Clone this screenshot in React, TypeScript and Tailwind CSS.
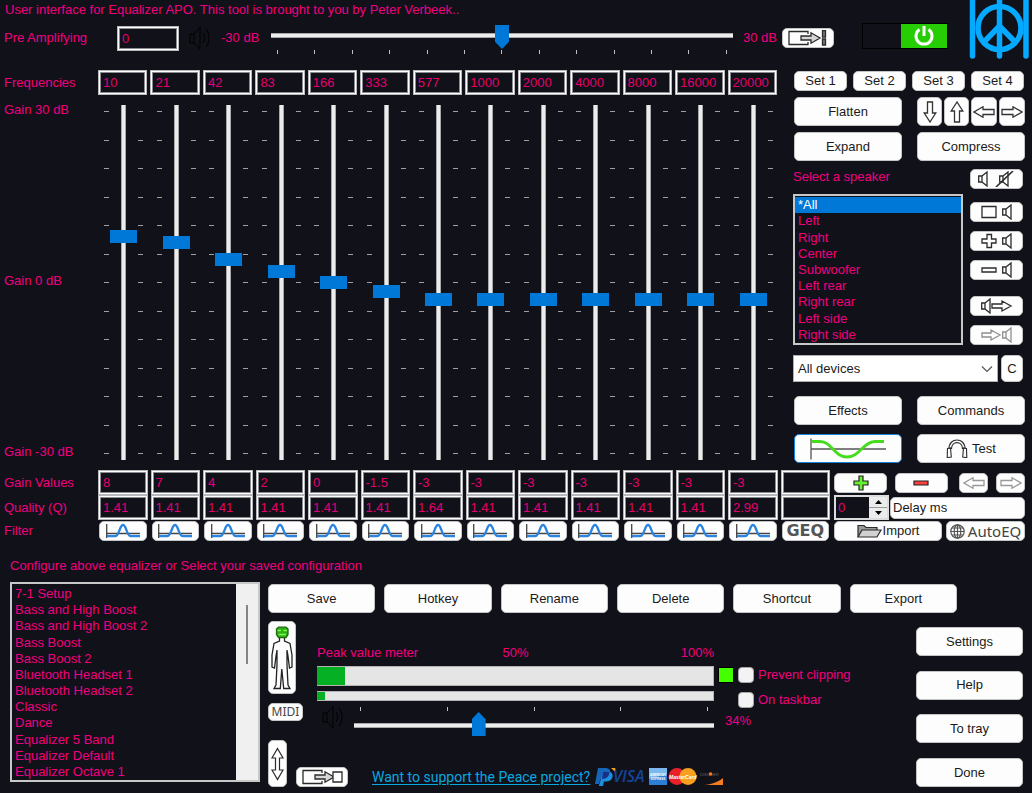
import { useState } from "react";
import type { ReactNode } from "react";
import clsx from "clsx";

const FREQUENCIES = ["10", "21", "42", "83", "166", "333", "577", "1000", "2000", "4000", "8000", "16000", "20000"];
const GAINS = ["8", "7", "4", "2", "0", "-1.5", "-3", "-3", "-3", "-3", "-3", "-3", "-3", ""];
const QUALITIES = ["1.41", "1.41", "1.41", "1.41", "1.41", "1.41", "1.64", "1.41", "1.41", "1.41", "1.41", "1.41", "2.99", ""];
const SPEAKERS = ["*All", "Left", "Right", "Center", "Subwoofer", "Left rear", "Right rear", "Left side", "Right side"];
const PRESETS = [
  "7-1 Setup",
  "Bass and High Boost",
  "Bass and High Boost 2",
  "Bass Boost",
  "Bass Boost 2",
  "Bluetooth Headset 1",
  "Bluetooth Headset 2",
  "Classic",
  "Dance",
  "Equalizer 5 Band",
  "Equalizer Default",
  "Equalizer Octave 1",
];

const fieldStyle =
  "h-[25px] w-full min-w-0 border border-[#b8b8bc] bg-transparent pl-[4px] text-[#e4006f] shadow-[inset_0_0_0_1px_#ffffff,inset_0_0_0_2px_#8c8c90] outline-none";

function Button({ className, label, children }: { className?: string; label?: string; children: ReactNode }) {
  return (
    <button
      type="button"
      aria-label={label}
      className={clsx(
        "flex shrink-0 items-center justify-center rounded-[5px] border border-[#c4c4c4] bg-[#fdfdfd] text-[#1a1a1a]",
        className,
      )}
    >
      {children}
    </button>
  );
}

function Field({ value, label, onChange }: { value: string; label: string; onChange?: (v: string) => void }) {
  const [own, setOwn] = useState(value);
  return (
    <input
      type="text"
      aria-label={label}
      value={onChange ? value : own}
      onChange={(e) => (onChange ? onChange(e.target.value) : setOwn(e.target.value))}
      className={fieldStyle}
    />
  );
}

/* ---------- icons ---------- */

function SoundIcon() {
  return (
    <svg width="22" height="24" viewBox="0 0 22 24" fill="none" stroke="#000" strokeWidth="1" className="shrink-0">
      <path d="M1 8h4v9H1zM5 8l6-7v22l-6-6" />
      <path d="M14 7c2 3 2 7 0 10M17 3c4 5 4 13 0 18" />
    </svg>
  );
}

function ArrowIcon({ dir, color = "#333" }: { dir: "left" | "right" | "up" | "down"; color?: string }) {
  if (dir === "left" || dir === "right") {
    return (
      <svg width="22" height="12" viewBox="0 0 22 12" fill="#fff" stroke={color} strokeWidth="1.3">
        <path d="M1 3.500h11V.8L21 6l-9 5.200V8.500H1z" transform={dir === "left" ? "rotate(180 11 6)" : undefined} />
      </svg>
    );
  }
  return (
    <svg width="14" height="22" viewBox="0 0 14 22" fill="#fff" stroke={color} strokeWidth="1.3">
      <path d="M4.500 1v11H1.200L7 21l5.800-9H9.500V1z" transform={dir === "up" ? "rotate(180 7 11)" : undefined} />
    </svg>
  );
}

function TransferIcon({ target }: { target: "bar" | "box" }) {
  return (
    <svg width="42" height="16" viewBox="0 0 42 16" fill="none" stroke="#2b2b2b" strokeWidth="1.3">
      <path d="M21 4V1.500H2v13h19V12" />
      <path d="M14 6h10V2.800L33 8l-9 5.200V10H14z" fill="#d6d6d6" />
      {target === "bar" ? (
        <path d="M35.500.7h3v6.500h-3zM35.500 9h3v6h-3z" fill="#777" />
      ) : (
        <path d="M32 3h9v10h-9z" fill="#fff" />
      )}
    </svg>
  );
}

function PeaceLogo() {
  return (
    <svg width="60" height="59" viewBox="0 0 60 59" fill="none" stroke="#05a9ff" strokeWidth="5.500" strokeLinecap="round" className="shrink-0">
      <path d="M3.500 0v56M57 0v56M30.500 0v56" />
      <circle cx="30.500" cy="28" r="21.500" />
      <path d="M30.500 26L15 42M30.500 26L46 42" strokeLinecap="butt" />
    </svg>
  );
}

type SpeakerGlyph = "mute" | "box" | "plus" | "minus" | "out" | "in";

function SpeakerShape({ x }: { x: number }) {
  return (
    <g transform={`translate(${x} 0)`}>
      <path d="M.7 5h3.300v6H.7zM4 5l5-4v14l-5-4" />
    </g>
  );
}

function SpeakerIcon({ kind }: { kind: SpeakerGlyph }) {
  return (
    <svg width="42" height="16" viewBox="0 0 42 16" fill="none" stroke={kind === "in" ? "#8f8f8f" : "#2b2b2b"} strokeWidth="1.300">
      {kind === "mute" && (
        <>
          <SpeakerShape x={2} />
          <SpeakerShape x={23} />
          <path d="M20 16L37 0" strokeWidth="1.600" />
        </>
      )}
      {kind === "box" && (
        <>
          <path d="M6 2.500h14v11H6z" />
          <SpeakerShape x={26} />
        </>
      )}
      {kind === "plus" && (
        <>
          <path d="M11 1.500h4.500V6H20v4h-4.500v4.500H11V10H6V6h5z" />
          <SpeakerShape x={26} />
        </>
      )}
      {kind === "minus" && (
        <>
          <path d="M6 6h14v4H6z" />
          <SpeakerShape x={26} />
        </>
      )}
      {kind === "out" && (
        <>
          <SpeakerShape x={5} />
          <path d="M16 6h10V3l9 5-9 5v-3H16z" />
        </>
      )}
      {kind === "in" && (
        <>
          <path d="M6 6h9V3l9 5-9 5v-3H6z" />
          <SpeakerShape x={26} />
        </>
      )}
    </svg>
  );
}

function FilterIcon() {
  return (
    <svg width="34" height="16" viewBox="0 0 34 16" fill="none">
      <path d="M.7 1v14M0 10.500h34" stroke="#444" strokeWidth="1.300" />
      <path d="M1 13.200h8c4.500 0 4.500-11.200 8-11.200s3.500 11.200 8 11.200h9" stroke="#2b84e0" strokeWidth="2.300" />
    </svg>
  );
}

function GraphIcon() {
  return (
    <svg width="76" height="22" viewBox="0 0 76 22" fill="none">
      <path d="M1 .5v21M1 11h75" stroke="#555" strokeWidth="1.300" />
      <path d="M2 3.500h8c12 0 14 15.500 27 15.500S53 3.500 65 3.500h9" stroke="#46dc1e" strokeWidth="2.800" />
    </svg>
  );
}

function HeadphoneIcon() {
  return (
    <svg width="22" height="20" viewBox="0 0 22 20" fill="none" stroke="#2b2b2b" strokeWidth="1.100">
      <path d="M3 10C2.500-2 19.500-2 19 10M5.500 10c0-8.500 11-8.500 11 0" />
      <path d="M1.500 9.500l3-.5.800 9-3 .5H1.200zM20.500 9.500l-3-.5-.8 9 3 .5h1.100z" />
    </svg>
  );
}

function FolderIcon() {
  return (
    <svg width="25" height="14" viewBox="0 0 25 14" stroke="#2b2b2b" strokeWidth="1.200">
      <path d="M1 13V1.500h6l2 2h11V6" fill="#999" />
      <path d="M1 13L5 6h19l-4 7z" fill="#d2d2d2" />
    </svg>
  );
}

function GlobeIcon() {
  return (
    <svg width="15" height="15" viewBox="0 0 15 15" fill="none" stroke="#555" strokeWidth="1.200">
      <circle cx="7.500" cy="7.500" r="6.700" />
      <ellipse cx="7.500" cy="7.500" rx="3.300" ry="6.700" />
      <path d="M7.500.8v13.400M.8 7.500h13.400M1.800 4h11.400M1.800 11h11.400" />
    </svg>
  );
}

function PersonIcon() {
  return (
    <svg width="22" height="64" viewBox="0 0 22 64" fill="none" stroke="#222" strokeWidth="1.300">
      <path d="M8.500 12v3L3 17.500 1 29v12l2.500 1L5 30l1-6v15l-1 20-2 3.500h6.300L10.800 43l1.900 19.500h6.300L17 59l-1-20V24l1 6 1.500 12 2.500-1V29l-2-11.500-5.500-2.500v-3" />
      <path d="M5.500 3l2-1.800h7.500L17 3v5.500l-2 3.200H7.500l-2-3.200z" fill="#2fae16" stroke="#1d6b0d" />
      <path d="M6.500 4.500H10M12.500 4.500H16M7.500 8.500H15" stroke="#7dff50" />
    </svg>
  );
}

function UpDownIcon() {
  return (
    <svg width="13" height="34" viewBox="0 0 13 34" fill="#fff" stroke="#2b2b2b" strokeWidth="1.200">
      <path d="M6.500 1.500L12 11H8.500v12H12l-5.500 9.500L1 23h3.500V11H1z" />
    </svg>
  );
}

function PaymentIcons() {
  return (
    <svg width="130" height="20" viewBox="0 0 130 20" role="img" aria-label="Payment options">
      <path d="M3 1h7c4 0 6 2 5 6-1 3.500-4 5-7.500 5H5.500L4 17H0z" fill="#1565b8" />
      <path d="M8 5h5.500c3.500 0 4.500 2 4 5-1 3.500-3.500 4.500-7 4.500H9L8 19H3.800z" fill="#1a8fe0" />
      <path d="M8 5h5l1.500.3C14 10 11 12 7 12z" fill="#1b2f86" />
      <path d="M16 1h4l1.500 5z" fill="#f3a712" />
      <text x="18" y="15" fontFamily="Open Sans, sans-serif" fontSize="16" fontStyle="italic" fontWeight="600" fill="#12459a">VISA</text>
      <path d="M54 1h18v17H54z" fill="#2d7fd6" />
      <path d="M54 1h18v6l-18 5z" fill="#7ab8ee" />
      <text x="55" y="9" fontFamily="Liberation Sans, sans-serif" fontSize="3" fontWeight="700" fill="#fff">AMERICAN</text>
      <text x="56" y="13" fontFamily="Liberation Sans, sans-serif" fontSize="3" fontWeight="700" fill="#fff">EXPRESS</text>
      <circle cx="82" cy="9.500" r="8.500" fill="#e8202a" />
      <circle cx="93" cy="9.500" r="8.500" fill="#f79f1f" />
      <text x="74" y="12" fontFamily="Liberation Sans, sans-serif" fontSize="5" fontStyle="italic" fontWeight="700" fill="#fff">MasterCard</text>
      <text x="105" y="9" fontFamily="Liberation Sans, sans-serif" fontSize="4" fill="#666">DISC VER</text>
      <circle cx="115.500" cy="7" r="1.800" fill="#f47b20" />
      <path d="M128 11v7h-19c8-.5 14-3 19-7z" fill="#f47b20" />
    </svg>
  );
}

/* ---------- equalizer bands ---------- */

function BandTicks() {
  return (
    <div className="flex flex-col justify-between py-[6px]">
      {Array.from({ length: 13 }, (_, i) => (
        <span key={i} className="h-px w-[5px] bg-[#a0a0a0]" />
      ))}
    </div>
  );
}

function Band({ value, label, onChange }: { value: number; label: string; onChange: (v: string) => void }) {
  return (
    <div className="flex h-[355px] justify-center pl-[2px]">
      <BandTicks />
      <div className="mx-px flex">
        <input
          type="range"
          min={-30}
          max={30}
          step={0.5}
          value={value}
          aria-label={label}
          onChange={(e) => onChange(e.target.value)}
          className="m-0 h-full w-[27px] appearance-none bg-transparent bg-[linear-gradient(90deg,#a8a8a8_1px,#ececec_1px,#ececec_4px,#a8a8a8_4px)] bg-[length:5px_100%] bg-center bg-no-repeat [direction:rtl] [writing-mode:vertical-lr] [&::-webkit-slider-thumb]:h-[13px] [&::-webkit-slider-thumb]:w-[27px] [&::-webkit-slider-thumb]:appearance-none [&::-webkit-slider-thumb]:bg-[#0078d7]"
        />
      </div>
      <BandTicks />
    </div>
  );
}

const horizontalSlider =
  "m-0 block w-full appearance-none bg-transparent bg-[linear-gradient(#a8a8a8_1px,#ececec_1px,#ececec_4px,#a8a8a8_4px)] bg-[length:100%_5px] bg-no-repeat [&::-webkit-slider-thumb]:h-[24px] [&::-webkit-slider-thumb]:w-[14px] [&::-webkit-slider-thumb]:appearance-none [&::-webkit-slider-thumb]:bg-[#0078d7]";

function SliderTicks({ count }: { count: number }) {
  return (
    <div className="flex justify-between px-[6px]">
      {Array.from({ length: count }, (_, i) => (
        <span key={i} className="h-[4px] w-px bg-[#c0c0c0]" />
      ))}
    </div>
  );
}

function ListBox({ items, initial, label }: { items: string[]; initial: number; label: string }) {
  const [selected, setSelected] = useState(initial);
  return (
    <ul role="listbox" aria-label={label} className="flex h-full min-w-0 flex-1 flex-col">
      {items.map((item, i) => (
        <li
          key={item}
          role="option"
          aria-selected={i === selected}
          onClick={() => setSelected(i)}
          className={clsx("flex flex-1 items-center pl-[3px] leading-4", i === selected && "bg-[#0078d7] text-white")}
        >
          {item}
        </li>
      ))}
    </ul>
  );
}

function Header() {
  const [preamp, setPreamp] = useState("0");
  const [on, setOn] = useState(true);
  return (
    <header className="flex items-start pr-[3px]">
      <div className="min-w-0 flex-1">
        <p className="pl-[5px] leading-5">User interface for Equalizer APO. This tool is brought to you by Peter Verbeek..</p>
        <div className="mt-[3px] flex h-[30px] items-center">
          <label htmlFor="preamp" className="w-[117px] shrink-0 pl-[4px]">Pre Amplifying</label>
          <input id="preamp" type="text" value={preamp} onChange={(e) => setPreamp(e.target.value)} className={clsx(fieldStyle, "max-w-[62px]")} />
          <div className="mx-[10px] flex">
            <SoundIcon />
          </div>
          <span className="w-[40px] shrink-0 whitespace-nowrap">-30 dB</span>
          <div className="mx-[10px] min-w-0 flex-1 pt-[3px]">
            <input
              type="range"
              min={-30}
              max={30}
              value={Number(preamp) || 0}
              aria-label="Pre amplifying gain"
              onChange={(e) => setPreamp(e.target.value)}
              className={clsx(horizontalSlider, "h-[24px] bg-[position:0_8px] [&::-webkit-slider-thumb]:[clip-path:polygon(0_0,100%_0,100%_70%,50%_100%,0_70%)]")}
            />
            <div className="pt-[1px]">
              <SliderTicks count={13} />
            </div>
          </div>
          <span className="w-[39px] shrink-0 whitespace-nowrap">30 dB</span>
          <Button className="h-[20px] w-[52px]" label="Send pre amplifying">
            <TransferIcon target="bar" />
          </Button>
        </div>
      </div>
      <button
        type="button"
        role="switch"
        aria-checked={on}
        aria-label="Equalizer power"
        onClick={() => setOn(!on)}
        className="mr-[21px] ml-[28px] mt-[23px] flex h-[26px] w-[86px] justify-end border border-black"
      >
        <span className="flex h-full w-[46px] items-center justify-center bg-[#26cc04]">
          <svg width="22" height="22" viewBox="0 0 22 22" fill="none" stroke="#fff" strokeWidth="3">
            <path d="M6.500 4.500a8 8 0 1 0 9 0M11 1v10" />
          </svg>
        </span>
      </button>
      <PeaceLogo />
    </header>
  );
}

function SpeakerPanel() {
  const sideButtons: { kind: SpeakerGlyph; space: string }[] = [
    { kind: "mute", space: "" },
    { kind: "box", space: "mt-[13px]" },
    { kind: "plus", space: "mt-[9px]" },
    { kind: "minus", space: "mt-[9px]" },
    { kind: "out", space: "mt-[16px]" },
    { kind: "in", space: "mt-[9px]" },
  ];
  return (
    <section className="flex w-[232px] shrink-0 flex-col pl-px">
      <div className="mt-px flex gap-[6px]">
        {["Set 1", "Set 2", "Set 3", "Set 4"].map((s) => (
          <Button key={s} className="h-[20px] w-[53px]">{s}</Button>
        ))}
      </div>
      <div className="mt-[6px] flex justify-between">
        <Button className="h-[29px] w-[108px]">Flatten</Button>
        <div className="flex gap-[2px]">
          <Button className="h-[29px] w-[25px]" label="Lower all"><ArrowIcon dir="down" /></Button>
          <Button className="h-[29px] w-[25px]" label="Raise all"><ArrowIcon dir="up" /></Button>
          <Button className="h-[29px] w-[26px]" label="Shift left"><ArrowIcon dir="left" /></Button>
          <Button className="h-[29px] w-[26px]" label="Shift right"><ArrowIcon dir="right" /></Button>
        </div>
      </div>
      <div className="mt-[6px] flex justify-between">
        <Button className="h-[29px] w-[108px]">Expand</Button>
        <Button className="h-[29px] w-[108px]">Compress</Button>
      </div>
      <div className="mt-[8px] flex justify-between pr-[2px]">
        <div className="-ml-px w-[170px]">
          <p className="leading-4">Select a speaker</p>
          <div className="mt-[9px] flex h-[151px] border-2 border-[#c8c8c8] pt-px">
            <ListBox items={SPEAKERS} initial={0} label="Select a speaker" />
          </div>
        </div>
        <div className="flex w-[53px] flex-col">
          {sideButtons.map(({ kind, space }) => (
            <Button key={kind} className={clsx("h-[20px] w-[53px]", space)} label={`Speaker ${kind}`}>
              <SpeakerIcon kind={kind} />
            </Button>
          ))}
        </div>
      </div>
      <div className="-ml-px mt-[10px] flex gap-[3px] pr-[2px]">
        <div className="relative min-w-0 flex-1">
          <select aria-label="Device" className="h-[27px] w-full appearance-none border border-[#b0b0b0] bg-white pl-[4px] text-[#1a1a1a]">
            <option>All devices</option>
          </select>
          <svg width="12" height="8" viewBox="0 0 12 8" fill="none" stroke="#555" strokeWidth="1.200" className="pointer-events-none absolute top-[10px] right-[5px]">
            <path d="M1 1.500l5 5 5-5" />
          </svg>
        </div>
        <Button className="h-[27px] w-[22px]">C</Button>
      </div>
      <div className="mt-[14px] flex justify-between">
        <Button className="h-[29px] w-[108px]">Effects</Button>
        <Button className="h-[29px] w-[108px]">Commands</Button>
      </div>
      <div className="mt-[9px] flex justify-between">
        <Button className="h-[29px] w-[108px] border-[#1583dc]!" label="Graph"><GraphIcon /></Button>
        <Button className="h-[29px] w-[108px] gap-[4px]"><HeadphoneIcon />Test</Button>
      </div>
    </section>
  );
}

function ValueRow({ label, children, side }: { label: string; children: ReactNode; side: ReactNode }) {
  return (
    <div className="flex items-center">
      <span className="w-[98px] shrink-0 pl-[4px]">{label}</span>
      <div className="grid min-w-0 flex-1 grid-cols-14 gap-[3px]">{children}</div>
      <div className="ml-[4px] flex w-[191px] shrink-0 items-center justify-between">{side}</div>
    </div>
  );
}

function DelaySpinner() {
  const [delay, setDelay] = useState(0);
  return (
    <div className="flex h-[25px] w-[55px] border-2 border-[#dcdcdc]">
      <input
        type="text"
        aria-label="Delay"
        value={delay}
        onChange={(e) => setDelay(Number(e.target.value) || 0)}
        className="w-0 flex-1 bg-transparent pl-[2px] text-[#e4006f] outline-none"
      />
      <div className="flex w-[18px] flex-col bg-[#ececec]">
        <button type="button" aria-label="Increase delay" onClick={() => setDelay(delay + 1)} className="flex flex-1 items-center justify-center border-b border-[#9a9a9a]">
          <svg width="7" height="4" viewBox="0 0 7 4"><path d="M0 4l3.500-4L7 4z" /></svg>
        </button>
        <button type="button" aria-label="Decrease delay" onClick={() => setDelay(delay - 1)} className="flex flex-1 items-center justify-center">
          <svg width="7" height="4" viewBox="0 0 7 4"><path d="M0 0l3.500 4L7 0z" /></svg>
        </button>
      </div>
    </div>
  );
}

function Check({ id, label }: { id: string; label: string }) {
  return (
    <>
      <input id={id} type="checkbox" className="size-[16px] shrink-0 appearance-none rounded-[4px] border border-[#a8a8a8] bg-[#f3f3f3] checked:bg-[#0078d7]" />
      <label htmlFor={id} className="ml-[4px] whitespace-nowrap leading-4">{label}</label>
    </>
  );
}

function PeakMeter() {
  const [volume, setVolume] = useState(34);
  return (
    <>
      <div className="ml-[14px] min-w-0 flex-1 pt-[24px]">
        <div className="grid grid-cols-3 leading-4">
          <span>Peak value meter</span>
          <span className="text-center">50%</span>
          <span className="text-right">100%</span>
        </div>
        <div className="mt-[5px] h-[20px] border-y border-r border-[#b4b4b4] bg-[#e5e5e5]">
          <div className="h-full w-[7%] bg-[#06b025]" />
        </div>
        <div className="mt-[5px] h-[10px] border-y border-r border-[#b4b4b4] bg-[#e5e5e5]">
          <div className="h-full w-[2%] bg-[#06b025]" />
        </div>
        <div className="mt-[4px] flex pl-[5px]">
          <SoundIcon />
          <div className="ml-[10px] min-w-0 flex-1 pt-[2px]">
            <SliderTicks count={5} />
            <input
              type="range"
              min={0}
              max={100}
              value={volume}
              aria-label="Volume"
              onChange={(e) => setVolume(Number(e.target.value))}
              className={clsx(horizontalSlider, "mt-px h-[24px] bg-[position:0_11px] [&::-webkit-slider-thumb]:[clip-path:polygon(50%_0,100%_30%,100%_100%,0_100%,0_30%)]")}
            />
          </div>
        </div>
      </div>
      <div className="ml-[4px] w-[198px] shrink-0 pt-[46px]">
        <div className="flex items-center">
          <span className="mr-[4px] size-[16px] border border-black bg-[#44ff00]" />
          <Check id="clipping" label="Prevent clipping" />
        </div>
        <div className="mt-[9px] flex items-center pl-[20px]">
          <Check id="taskbar" label="On taskbar" />
        </div>
        <p className="mt-[5px] pl-[7px] leading-4">{volume}%</p>
      </div>
    </>
  );
}

function Configurations() {
  return (
    <section className="mt-[17px] px-[10px] pr-[9px]">
      <h2 className="leading-4">Configure above equalizer or Select your saved configuration</h2>
      <div className="mt-[8px] flex">
        <div className="flex h-[200px] w-[250px] shrink-0 border-2 border-[#c8c8c8]">
          <div className="flex min-w-0 flex-1 pt-[2px]">
            <ListBox items={PRESETS} initial={-1} label="Saved configurations" />
          </div>
          <div className="flex w-[22px] justify-center bg-[#f0f0f0] pt-[21px]">
            <span className="h-[59px] w-[2px] bg-[#858585]" />
          </div>
        </div>
        <div className="ml-[8px] min-w-0 flex-1 pt-[2px]">
          <div className="mr-[66px] grid grid-cols-6 gap-[9px]">
            {["Save", "Hotkey", "Rename", "Delete", "Shortcut", "Export"].map((b) => (
              <Button key={b} className="h-[29px]">{b}</Button>
            ))}
          </div>
          <div className="mt-[8px] flex">
            <div className="min-w-0 flex-1">
              <div className="flex h-[119px]">
                <div className="w-[35px] shrink-0">
                  <Button className="h-[73px] w-[28px]" label="Person"><PersonIcon /></Button>
                  <Button className="mt-[9px] h-[18px] w-[35px] font-['Noto_Sans',sans-serif] text-[12px] text-[#444]!">MIDI</Button>
                </div>
                <PeakMeter />
              </div>
              <div className="flex items-end">
                <Button className="h-[47px] w-[19px]" label="Resize"><UpDownIcon /></Button>
                <Button className="ml-[9px] h-[20px] w-[52px]" label="Send configuration"><TransferIcon target="box" /></Button>
                <a href="#support" className="ml-[24px] font-[Roboto,sans-serif] text-[14px] leading-5 whitespace-nowrap text-[#08a8e0] underline underline-offset-2">
                  Want to support the Peace project?
                </a>
                <div className="ml-[5px] shrink-0"><PaymentIcons /></div>
              </div>
            </div>
            <div className="flex w-[107px] shrink-0 flex-col justify-between pt-[6px]">
              {["Settings", "Help", "To tray", "Done"].map((b) => (
                <Button key={b} className="h-[29px]">{b}</Button>
              ))}
            </div>
          </div>
        </div>
      </div>
    </section>
  );
}

export default function App() {
  const [gains, setGains] = useState(GAINS);
  const setGain = (i: number, v: string) => setGains(gains.map((g, j) => (j === i ? v : g)));

  return (
    <main className="min-h-screen overflow-hidden bg-[#11111a] font-['Liberation_Sans',Arial,sans-serif] text-[13px] text-[#f0007f]">
      <Header />
      <div className="mt-[11px] flex pr-[7px]">
        <section className="min-w-0 flex-1 pr-[16px]">
          <div className="flex items-center">
            <span className="w-[98px] shrink-0 pl-[4px]">Frequencies</span>
            <div className="grid min-w-0 flex-1 grid-cols-13 gap-[3px]">
              {FREQUENCIES.map((f, i) => (
                <Field key={f} value={f} label={`Frequency ${i + 1}`} />
              ))}
            </div>
          </div>
          <div className="mt-[10px] flex">
            <div className="-mt-[3px] flex w-[98px] shrink-0 flex-col justify-between pl-[4px] leading-4">
              <span>Gain 30 dB</span>
              <span>Gain 0 dB</span>
              <span>Gain -30 dB</span>
            </div>
            <div className="grid min-w-0 flex-1 grid-cols-13 gap-[3px]">
              {FREQUENCIES.map((f, i) => (
                <Band key={f} value={Number(gains[i]) || 0} label={`Gain at ${f} Hz`} onChange={(v) => setGain(i, v)} />
              ))}
            </div>
          </div>
        </section>
        <SpeakerPanel />
      </div>
      <div className="mt-[7px] pr-[7px]">
        <ValueRow
          label="Gain Values"
          side={
            <>
              <Button className="h-[20px] w-[53px]" label="Add band">
                <svg width="16" height="16" viewBox="0 0 16 16" fill="#66f22e" stroke="#222" strokeWidth="1.200">
                  <path d="M6 1h4v5h5v4h-5v5H6v-5H1V6h5z" />
                </svg>
              </Button>
              <Button className="h-[20px] w-[53px]" label="Remove band">
                <svg width="16" height="6" viewBox="0 0 16 6" fill="#ff4040" stroke="#222" strokeWidth="1.200">
                  <path d="M1 1h14v4H1z" />
                </svg>
              </Button>
              <div className="flex gap-[8px] pl-[4px]">
                <Button className="h-[20px] w-[29px]" label="Previous bands"><ArrowIcon dir="left" color="#999" /></Button>
                <Button className="h-[20px] w-[29px]" label="Next bands"><ArrowIcon dir="right" color="#999" /></Button>
              </div>
            </>
          }
        >
          {gains.map((g, i) => (
            <Field key={i} value={g} label={`Gain value ${i + 1}`} onChange={(v) => setGain(i, v)} />
          ))}
        </ValueRow>
        <ValueRow
          label="Quality (Q)"
          side={
            <>
              <DelaySpinner />
              <Button className="h-[22px] w-[135px] justify-start! pl-[2px]">Delay ms</Button>
            </>
          }
        >
          {QUALITIES.map((q, i) => (
            <Field key={i} value={q} label={`Quality ${i + 1}`} />
          ))}
        </ValueRow>
        <div className="pt-px">
          <ValueRow
            label="Filter"
            side={
              <>
                <Button className="h-[20px] w-[108px] gap-px"><FolderIcon />Import</Button>
                <Button className="h-[20px] w-[79px] gap-[3px] font-['Noto_Sans',sans-serif] text-[15px] text-[#444]!"><GlobeIcon />AutoEQ</Button>
              </>
            }
          >
            {FREQUENCIES.map((f) => (
              <Button key={f} className="mx-px h-[20px]" label={`Filter type at ${f} Hz`}><FilterIcon /></Button>
            ))}
            <Button className="mx-px h-[20px] font-['DejaVu_Sans',sans-serif] text-[16px] font-bold text-[#555]!">GEQ</Button>
          </ValueRow>
        </div>
      </div>
      <Configurations />
    </main>
  );
}
